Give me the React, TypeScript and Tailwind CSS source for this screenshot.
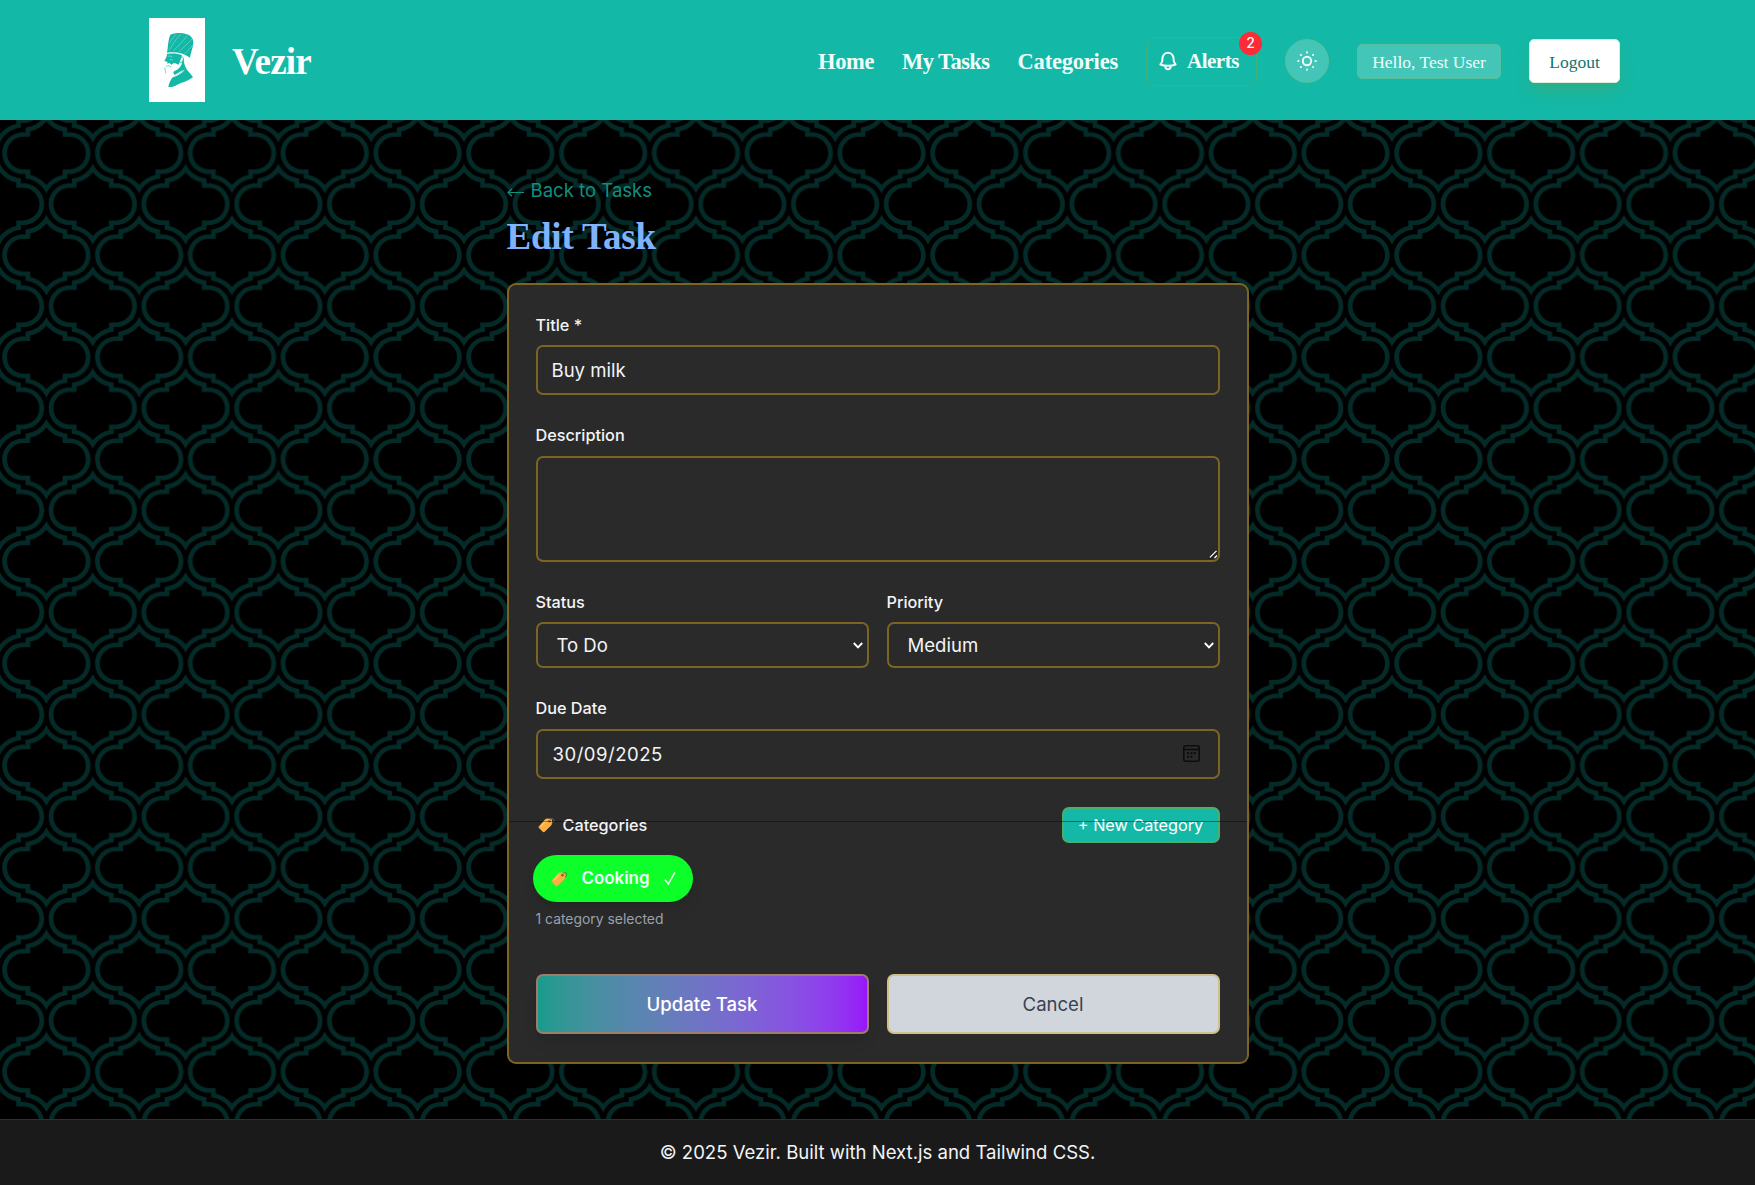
import React from 'react';

const GOLD = 'border-2 border-[#7b6424]';

function MoroccanBackground() {
  return (
    <svg className="pointer-events-none absolute inset-0 h-full w-full" aria-hidden="true">
      <defs>
        <pattern id="moroccan" width="80" height="88" patternUnits="userSpaceOnUse" patternTransform="scale(1.16)">
          <path
            fill="#042b28"
            fillRule="evenodd"
            d="M22 21.91V26h-2c-9.94 0-18 8.06-18 18 0 9.943 8.058 18 18 18h2v4.09c8.012.722 14.785 5.738 18 12.73 3.212-6.99 9.983-12.008 18-12.73V62h2c9.94 0 18-8.06 18-18 0-9.943-8.058-18-18-18h-2v-4.09c-8.012-.722-14.785-5.738-18-12.73-3.212 6.99-9.983 12.008-18 12.73zM54 58v4.696c-5.574 1.316-10.455 4.428-14 8.69-3.545-4.262-8.426-7.374-14-8.69V58h-5.993C12.27 58 6 51.734 6 44c0-7.732 6.275-14 14.007-14H26v-4.696c5.574-1.316 10.455-4.428 14-8.69 3.545 4.262 8.426 7.374 14 8.69V30h5.993C67.73 30 74 36.266 74 44c0 7.732-6.275 14-14.007 14H54zM42 88c0-9.94 8.06-18 18-18h2v-4.09c8.016-.722 14.787-5.738 18-12.73v7.434c-3.545 4.262-8.426 7.374-14 8.69V74h-5.993C52.275 74 46 80.268 46 88h-4zm-4 0c0-9.943-8.058-18-18-18h-2v-4.09c-8.012-.722-14.785-5.738-18-12.73v7.434c3.545 4.262 8.426 7.374 14 8.69V74h5.993C27.73 74 34 80.266 34 88h4zm4-88c0 9.943 8.058 18 18 18h2v4.09c8.012.722 14.785 5.738 18 12.73v-7.434c-3.545-4.262-8.426-7.374-14-8.69V14h-5.993C52.27 14 46 7.734 46 0h-4zM0 34.82c3.213-6.992 9.984-12.008 18-12.73V18h2c9.94 0 18-8.06 18-18h-4c0 7.732-6.275 14-14.007 14H14v4.696c-5.574 1.316-10.455 4.428-14 8.69v7.433z"
          />
        </pattern>
      </defs>
      <rect width="100%" height="100%" fill="url(#moroccan)" />
    </svg>
  );
}

function VizierLogo() {
  return (
    <svg viewBox="-15 -24 168 252" className="h-[84px] w-[56px] bg-white" fill="#14b8a6">
      <path d="M39 80C42 66 42 40 49 26c12-6 34-7 50-1 12 4 20 14 19 27-1 14-8 28-10 43-20-14-44-19-69-15z" />
      <g fill="none" stroke="#b9ece6" strokeWidth="1.200" strokeLinecap="round">
        <path d="M46 72c8-13 18-32 34-48M60 73c12-12 26-28 40-44M76 76c10-9 24-22 38-37M92 82c9-6 17-15 24-25M47 50c4-8 12-18 20-25" />
      </g>
      <path d="M39 84c18-3 33-1 45 4l-3 9c-2 8-5 13-8 20-4-4-9-6-15-5l-6 5c-2-5-6-6-13-4l2-5-10-3c3-7 8-11 8-21z" />
      <path d="M43 91c5-2 8-1 11 2M47 102c4-2 7-1 9 1" fill="none" stroke="#fff" strokeWidth="1.300" />
      <path d="M82 93c5-2 8 3 5 9-1 5-5 9-8 8l-2-5z" fill="#fff" stroke="#14b8a6" strokeWidth="2.400" />
      <path d="M88 97c2 10 3 24 11 34l18 22c-13 12-32 15-49 24-8 5-15 7-25 6 2-12 7-23 14-31 11-5 22-10 31-21L62 147c-2-4-4-6-4-10 12-4 23-14 26-26z" />
      <path d="M56 153c14-4 27-12 35-21" fill="none" stroke="#fff" strokeWidth="2.400" />
      <path d="M36 121c5-3 11-2 16 2M33 124c-2 7 3 10 2 18" fill="none" stroke="#14b8a6" strokeWidth="1.800" />
    </svg>
  );
}

function BellIcon() {
  return (
    <svg viewBox="0 0 24 24" className="size-[22px]" fill="none" stroke="currentColor" strokeWidth="2.200" strokeLinecap="round" strokeLinejoin="round">
      <path d="M14.86 17.08a23.85 23.85 0 0 0 5.45-1.31A8.97 8.97 0 0 1 18 9.75V9A6 6 0 0 0 6 9v.75a8.97 8.97 0 0 1-2.31 6.02c1.73.64 3.56 1.08 5.45 1.31m5.72 0a24.25 24.25 0 0 1-5.72 0m5.72 0a3 3 0 1 1-5.72 0" />
    </svg>
  );
}

function SunIcon() {
  return (
    <svg viewBox="0 0 20 20" className="size-5" fill="none" stroke="currentColor" strokeWidth="1.900" strokeLinecap="round">
      <circle cx="10" cy="10" r="4.200" />
      <path d="M10 1.200v.4M10 18.400v.4M1.200 10h.4M18.400 10h.4M3.800 3.800l.2.2M16 16l.2.2M3.800 16.200l.2-.2M16 4l.2-.2" />
    </svg>
  );
}

function TagIcon({ className }: { className: string }) {
  return (
    <svg viewBox="0 0 17 16" className={className}>
      <path d="M1 9.200 7.200 2.300c.5-.5 1.300-.8 2-.8l3.500.2c.8 0 1.300.6 1.300 1.300l-.1 3.800c0 .7-.3 1.200-.8 1.700l-6.400 6.200c-.6.6-1.400.6-2 0L1 11.100c-.6-.6-.5-1.300 0-1.900z" fill="#fcb040" />
      <path d="m2.800 9.400 5.300-5.800" stroke="#ffce73" strokeWidth="1.200" />
      <circle cx="11.400" cy="4.200" r="1.200" fill="#8a5a2b" />
      <path d="M11.400 4.200c.6-2.600 3.600-3.600 4.300-1.600.5 1.500-.6 2.900-1.700 3.600" fill="none" stroke="#7d6258" strokeWidth=".9" />
    </svg>
  );
}

function Chevron() {
  return (
    <svg viewBox="0 0 10 7" className="pointer-events-none absolute top-[20px] right-[6px] h-[7px] w-[10px]" fill="none" stroke="#fff" strokeWidth="1.900">
      <path d="m.8 1 4.200 4.300L9.200 1" />
    </svg>
  );
}

function CalendarIcon() {
  return (
    <svg viewBox="0 0 17 17" className="pointer-events-none absolute top-4 right-[20px] size-[17px]" fill="none" stroke="#0c0c0c" strokeWidth="1.500">
      <rect x=".8" y=".8" width="15.400" height="15.400" rx="2" />
      <path d="M.8 4.500h15.400" />
      <g fill="#0c0c0c" stroke="none">
        <rect x="4" y="7.200" width="2" height="2" />
        <rect x="7.400" y="7.200" width="2" height="2" />
        <rect x="10.800" y="7.200" width="2" height="2" />
        <rect x="4" y="10.800" width="2" height="2" />
        <rect x="7.400" y="10.800" width="2" height="2" />
      </g>
    </svg>
  );
}

function Label({ children }: { children: React.ReactNode }) {
  return <label className="block h-[23px] text-[16.240px] leading-[25px] font-medium text-gray-100">{children}</label>;
}

function SelectField({ label, value }: { label: string; value: string }) {
  return (
    <div>
      <Label>{label}</Label>
      <div className="relative mt-[9px]">
        <select
          defaultValue={value}
          className={`${GOLD} block h-[46px] w-full appearance-none rounded-[7px] bg-[#2a2a2a] pt-[1px] pl-[19px] text-[18.560px] text-gray-100`}
        >
          <option>{value}</option>
        </select>
        <Chevron />
      </div>
    </div>
  );
}

export default function App() {
  return (
    <div className="relative flex h-[1185px] w-[1755px] flex-col overflow-hidden bg-black font-[Inter,sans-serif] text-[18.560px]">
      <MoroccanBackground />

      <header className="relative flex h-[120px] shrink-0 items-center bg-[#14b8a6] pr-[135px] pl-[149px] font-['Liberation_Serif',serif] text-teal-50">
        <VizierLogo />
        <span className="ml-[27px] pt-[4px] text-[37px] leading-[40px] font-bold tracking-[-0.800px] text-white">Vezir</span>
        <nav className="ml-auto flex items-center gap-7 pt-[2px] text-[22.500px] leading-7 font-bold">
          <a className="pt-px tracking-[-0.400px]">Home</a>
          <a className="pt-px tracking-[-0.550px]">My Tasks</a>
          <a className="pt-px tracking-[-0.200px]">Categories</a>
          <button className="relative flex h-[49px] w-[111px] items-center gap-[8px] rounded-[9px] border border-[#3fb27e] pl-[10px]">
            <BellIcon />
            <span className="text-[21px] tracking-[-0.500px]">Alerts</span>
            <span className="absolute -top-[6px] -right-[6px] flex size-[23px] items-center justify-center rounded-full bg-[#fb2c36] font-[Inter,sans-serif] text-[14px] font-medium">2</span>
          </button>
          <button className="flex size-11 items-center justify-center rounded-full border border-[#58bf9d] bg-[#43c6b8]">
            <SunIcon />
          </button>
          <span className="flex h-[35px] w-[144px] items-center justify-center rounded-[5px] border border-[#58bf9d] bg-[#43c6b8] pt-px text-[17.500px] font-normal">
            Hello, Test User
          </span>
          <button className="flex h-[44px] w-[91px] items-center justify-center rounded-[5px] border border-[#d8efd8] bg-white pt-px text-[17.500px] font-normal text-[#0f766e] shadow-lg shadow-[#2fae85]">
            Logout
          </button>
        </nav>
      </header>

      <main className="relative mx-auto w-[742px] grow pt-[55px]">
        <a className="flex h-[30px] items-center leading-[30px] text-[#0f8f80]">
          <svg viewBox="0 0 17 9" className="mt-[4px] mr-[7px] h-[9px] w-[17px]" fill="none" stroke="currentColor" strokeWidth="1.200">
            <path d="M17 4.500H1M5 .8 1 4.500l4 3.700" />
          </svg>
          Back to Tasks
        </a>
        <h1 className="mt-[9px] h-[44px] font-['Liberation_Serif',serif] text-[37px] leading-[45px] font-bold tracking-[-0.200px] text-[#80b3fb]">
          Edit Task
        </h1>

        <form className={`${GOLD} relative mt-[25px] h-[781px] rounded-[9px] bg-[#2a2a2a] px-[27px] pt-[28px]`}>
          <Label>Title *</Label>
          <input
            defaultValue="Buy milk"
            className={`${GOLD} mt-[9px] block h-[50px] w-full rounded-[7px] bg-transparent px-[14px] text-gray-100`}
          />

          <div className="mt-[28px]">
            <Label>Description</Label>
            <div className="relative mt-[10px]">
              <textarea className={`${GOLD} block h-[106px] w-full resize-none rounded-[7px] bg-transparent`} />
              <svg viewBox="0 0 9 9" className="absolute right-[2px] bottom-[3px] size-[9px]" strokeWidth="1.300">
                <path d="m1 7.500 6.500-6.500M5.500 8l2.500-2.500" stroke="#fff" />
                <path d="m1 8.800 7-7" stroke="#111" strokeWidth="1" />
              </svg>
            </div>
          </div>

          <div className="mt-[28px] grid grid-cols-2 gap-[18px]">
            <SelectField label="Status" value="To Do" />
            <SelectField label="Priority" value="Medium" />
          </div>

          <div className="mt-[28px]">
            <Label>Due Date</Label>
            <div className="relative mt-[10px]">
              <input
                defaultValue="30/09/2025"
                className={`${GOLD} block h-[50px] w-full rounded-[7px] bg-transparent px-[15px] tracking-[0.500px] text-gray-100`}
              />
              <CalendarIcon />
            </div>
          </div>

          <div className="mt-[28px] flex h-[36px] items-center justify-between">
            <span className="flex items-center text-[16.240px] font-medium text-gray-100">
              <TagIcon className="mr-[8px] ml-[2px] h-4 w-[17px]" />
              Categories
            </span>
            <button className="h-[36px] w-[158px] rounded-[7px] border-2 border-[#4cae6c] bg-[#14b8a6] text-[16.240px] text-white">
              + New Category
            </button>
          </div>

          <button className="mt-[12px] -ml-[3px] flex h-[47px] w-[160px] items-center rounded-full bg-[#0dff2a] pl-[18px] text-[16.900px] font-semibold text-teal-50 shadow-lg">
            <TagIcon className="h-4 w-[17px]" />
            <span className="ml-[14px]">Cooking</span>
            <svg viewBox="0 0 12 14" className="ml-[15px] h-[13px] w-3" fill="none" stroke="currentColor" strokeWidth="1.600" strokeLinecap="round">
              <path d="M1 8.800 4.200 13 11 1" />
            </svg>
          </button>
          <p className="mt-[7px] h-5 text-[13.920px] leading-5 text-[#99a1af]">1 category selected</p>

          <div className="mt-[45px] grid grid-cols-2 gap-[18px]">
            <button className="h-[60px] rounded-[7px] border-2 border-[#a07c6b] bg-gradient-to-r from-[#119c8b] to-[#9810fa] bg-origin-border pt-px font-medium text-white shadow-lg">
              Update Task
            </button>
            <button className="h-[60px] rounded-[7px] border-2 border-[#d2c08a] bg-[#d1d5dc] pt-px text-[#364153]">Cancel</button>
          </div>

          <div className="pointer-events-none absolute inset-x-0 top-[536px] h-px bg-black/40" />
        </form>
      </main>

      <footer className="relative flex h-[66px] shrink-0 items-center justify-center border-t border-[#303030] bg-[#1a1a1a] text-gray-100">
        <p>© 2025 Vezir. Built with Next.js and Tailwind CSS.</p>
      </footer>
    </div>
  );
}
